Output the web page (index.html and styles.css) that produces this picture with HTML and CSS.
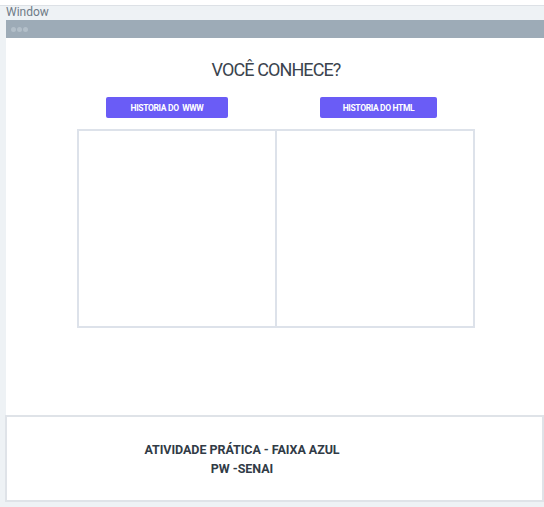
FILE: index.html
```html
<!DOCTYPE html>
<html lang="pt">
<head>
<meta charset="utf-8">
<title>Window</title>
<link rel="stylesheet" href="styles.css">
</head>
<body>
<div class="topstrip"></div>
<div class="label">Window</div>
<div class="window">
  <div class="titlebar">
    <span class="dot"></span><span class="dot"></span><span class="dot"></span>
  </div>
  <div class="content">
    <h1 class="heading">VOCÊ CONHECE?</h1>
    <div class="buttons">
      <button class="btn btn-www">HISTORIA DO&nbsp; WWW</button>
      <button class="btn btn-html">HISTORIA DO HTML</button>
    </div>
    <div class="panels">
      <div class="panel panel-left"></div>
      <div class="panel"></div>
    </div>
  </div>
  <div class="footer">
    <p class="footer-text">ATIVIDADE PRÁTICA - FAIXA AZUL<br>PW -SENAI</p>
  </div>
</div>
</body>
</html>
```
FILE: styles.css
```css
* { box-sizing: border-box; }
html, body { margin: 0; padding: 0; }
body {
  background: #eef2f5;
  font-family: Roboto, "Liberation Sans", sans-serif;
  width: 544px;
  height: 507px;
  overflow: hidden;
}
.topstrip {
  height: 6px;
  background: #ffffff;
  border-bottom: 1px solid #dde1e6;
}
.label {
  height: 14px;
  padding-left: 6px;
  font-size: 12px;
  line-height: 13px;
  color: #6f7b87;
}
.window {
  margin-left: 6px;
  background: #ffffff;
}
.titlebar {
  height: 18px;
  background: #9dabb7;
  display: flex;
  align-items: center;
  gap: 1px;
  padding-left: 5px;
}
.dot {
  width: 5px;
  height: 5px;
  border-radius: 50%;
  background: #b3bfc9;
}
.content {
  height: 377px;
  padding-top: 21px;
}
.heading {
  margin: 0;
  text-align: center;
  font-size: 18px;
  line-height: 22px;
  font-weight: 400;
  color: #3b444e;
  letter-spacing: -0.9px;
  padding-left: 2px;
}
.buttons {
  display: flex;
  gap: 92px;
  margin-top: 16px;
  padding-left: 100px;
}
.btn {
  height: 21px;
  border: none;
  border-radius: 2px;
  background: #6a5cf6;
  color: #ffffff;
  font-family: Roboto, "Liberation Sans", sans-serif;
  font-weight: 700;
  font-size: 8.5px;
  letter-spacing: -0.35px;
  padding: 0;
  white-space: nowrap;
}
.btn-www { width: 122px; }
.btn-html { width: 117px; }
.panels {
  margin-top: 11px;
  margin-left: 71px;
  width: 398px;
  height: 199px;
  border: 2px solid #dde2ea;
  display: grid;
  grid-template-columns: 198px 196px;
}
.panel-left { border-right: 2px solid #dde2ea; }
.footer {
  margin-left: -1px;
  height: 87px;
  border: 2px solid #dfe3e8;
  background: #ffffff;
  display: flex;
  align-items: center;
  justify-content: center;
  padding-right: 65px;
}
.footer-text {
  margin: 0;
  text-align: center;
  font-size: 12.5px;
  line-height: 19px;
  font-weight: 700;
  color: #313b46;
  letter-spacing: -0.05px;
}
```
